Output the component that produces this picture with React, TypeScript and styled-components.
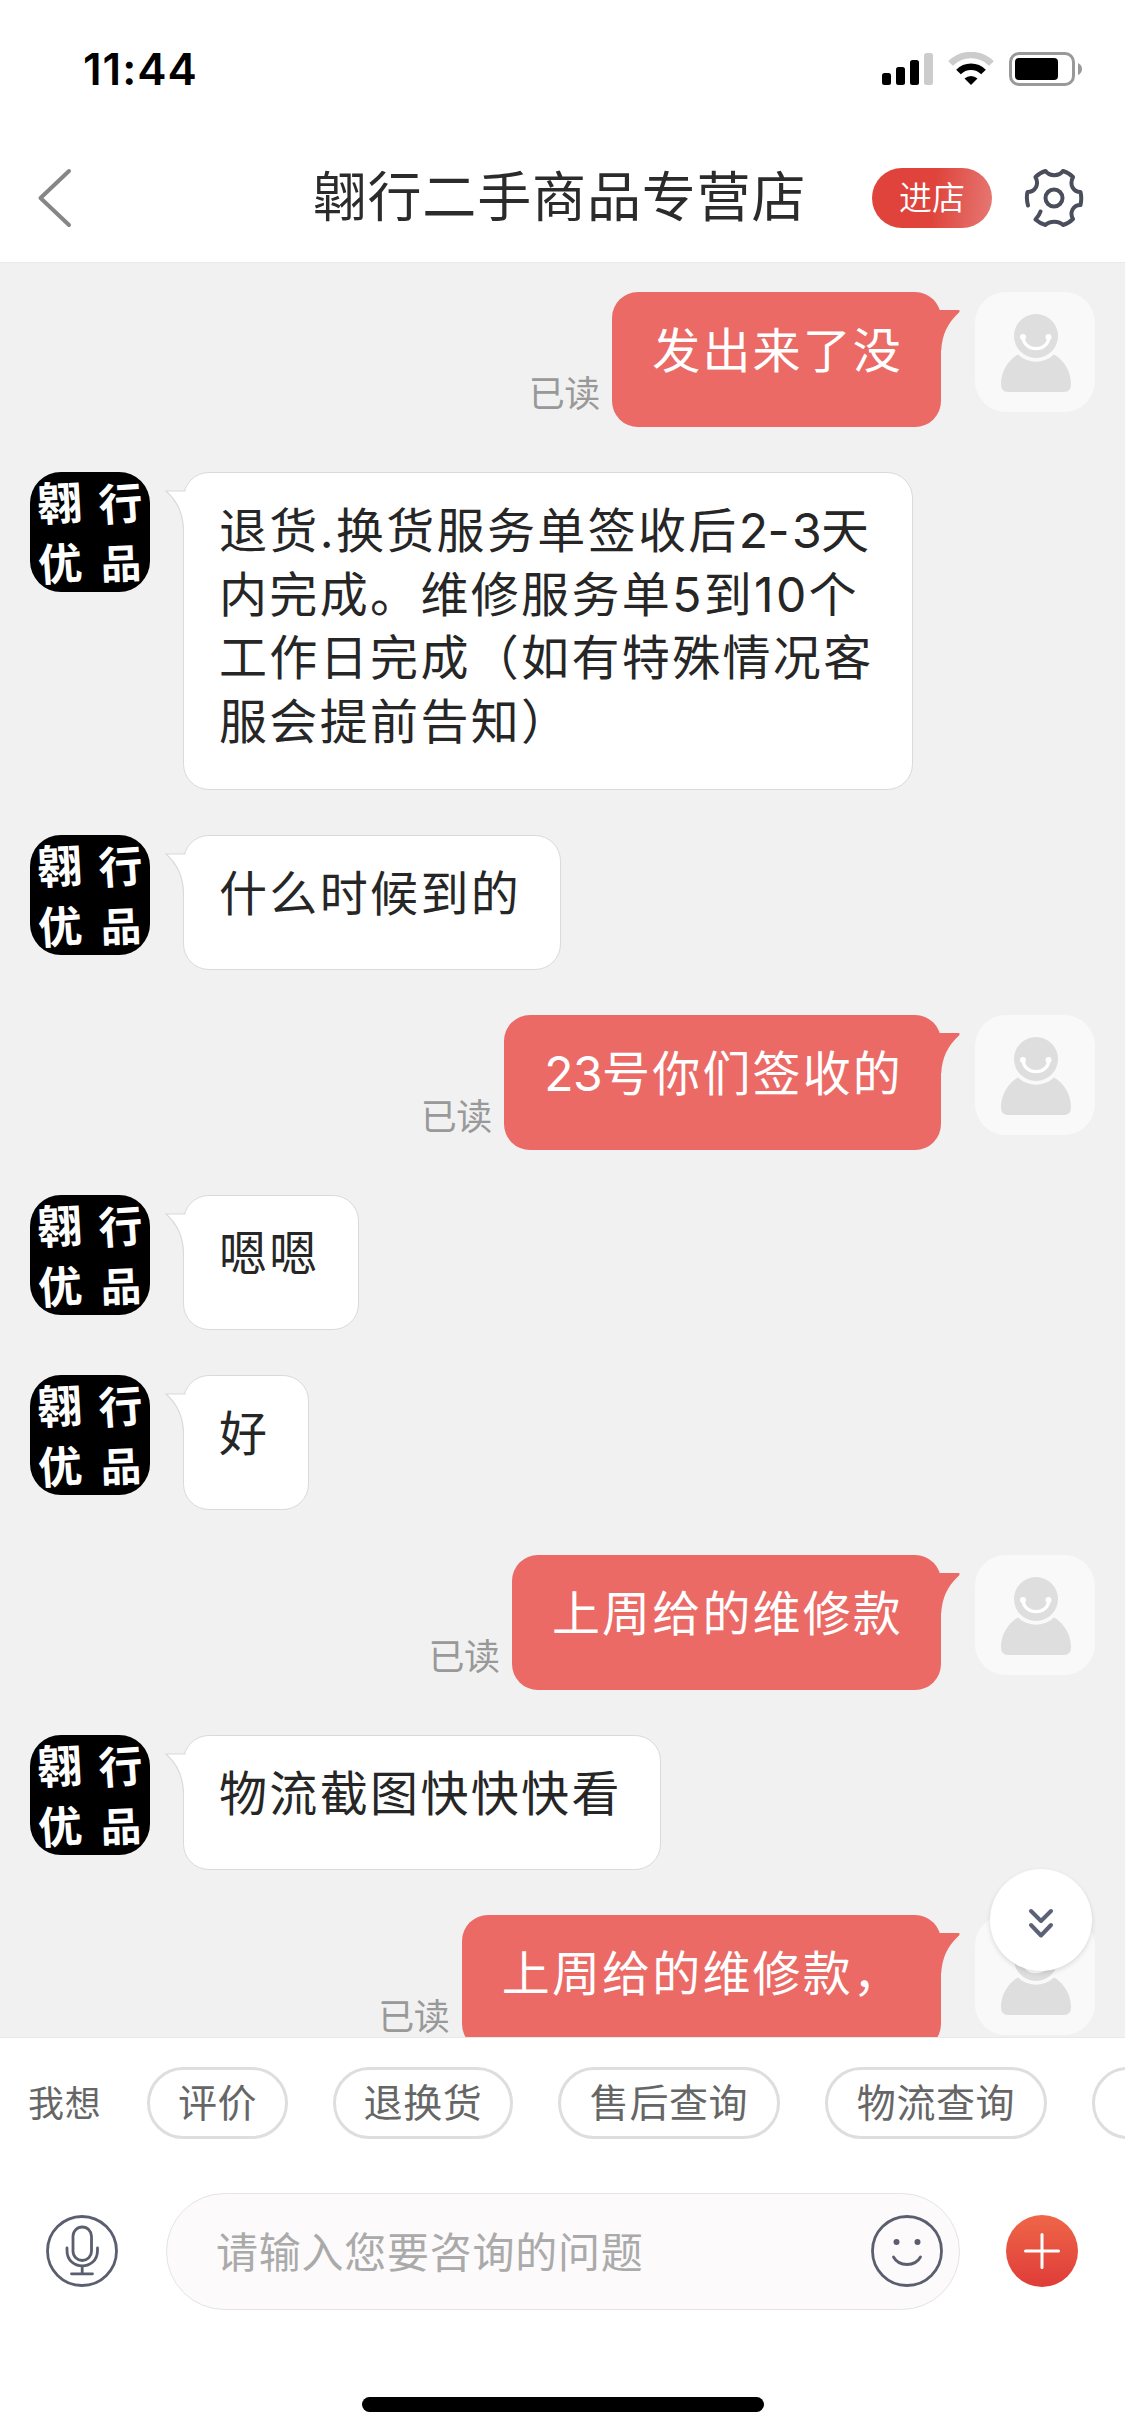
import React from "react";
import styled, { createGlobalStyle, css } from "styled-components";

const Global = createGlobalStyle`
  * { box-sizing: border-box; }
  body { margin: 0; background: #fff; }
`;

const Screen = styled.div`
  width: 1125px;
  height: 2436px;
  display: flex;
  flex-direction: column;
  overflow: hidden;
  background: #fff;
  font-family: Inter, "Noto Sans CJK SC", sans-serif;
  color: #262626;
`;

const StatusBar = styled.div`
  height: 132px;
  flex: none;
  display: flex;
  justify-content: space-between;
  padding: 52px 43px 0 83px;
`;

const Clock = styled.div`
  font-size: 44px;
  line-height: 34px;
  font-weight: 600;
  letter-spacing: 1px;
  color: #000;
`;

const StatusIcons = styled.svg`
  display: block;
  width: 200px;
  height: 34px;
`;

const NavBar = styled.div`
  height: 131px;
  flex: none;
  display: flex;
  align-items: center;
  padding: 2px 41px 0 36px;
  border-bottom: 1px solid #e9e9e9;
`;

const BackIcon = styled.svg`
  width: 38px;
  height: 62px;
  flex: none;
`;

const Title = styled.h1`
  margin: 0;
  flex: 1;
  padding-left: 173px;
  text-align: center;
  font-size: 54px;
  line-height: 80px;
  font-weight: 400;
  letter-spacing: 0.85px;
  color: #2b2b2b;
  white-space: nowrap;
`;

const ShopButton = styled.button`
  width: 120px;
  height: 60px;
  margin: 0 32px 0 0;
  padding: 0;
  border: 0;
  border-radius: 30px;
  background: linear-gradient(97deg, #df433b 50%, #e67874 100%);
  color: #fff;
  font: 350 33px/60px Inter, "Noto Sans CJK SC", sans-serif;
`;

const GearIcon = styled.svg`
  width: 60px;
  height: 60px;
  flex: none;
`;

const Chat = styled.div`
  position: relative;
  height: 1775px;
  flex: none;
  overflow: hidden;
  display: flex;
  flex-direction: column;
  gap: 45px;
  padding: 29px 30px 0;
  background: #f1f1f1;
  border-bottom: 1px solid #e8e8e8;
`;

const Row = styled.div<{ $mine?: boolean }>`
  display: flex;
  flex: none;
  align-items: flex-start;
  flex-direction: ${(p) => (p.$mine ? "row-reverse" : "row")};
  gap: ${(p) => (p.$mine ? 34 : 33)}px;
`;

const ShopAvatar = styled.div`
  width: 120px;
  height: 120px;
  flex: none;
  display: grid;
  grid-template-columns: 61px 46px;
  grid-template-rows: 60px 46px;
  padding: 8px 0 0 7px;
  border-radius: 31px;
  background: #000;
  color: #fff;
  font-size: 44px;
  line-height: 48px;
  font-weight: 700;
`;

const Brush = styled.span<{ $tilt: number; $scale?: number }>`
  width: 46px;
  text-align: center;
  transform: rotate(${(p) => p.$tilt}deg) scale(${(p) => p.$scale ?? 1});
`;

const UserAvatar = styled.svg`
  width: 120px;
  height: 120px;
  flex: none;
`;

const Bubble = styled.div<{ $mine?: boolean }>`
  position: relative;
  flex: none;
  min-height: 135px;
  font-size: 48px;
  line-height: 63.4px;
  white-space: nowrap;
  border-radius: 26px;
  ${(p) =>
    p.$mine
      ? css`
          padding: 27px 38px 36px 40px;
          letter-spacing: 2.15px;
          background: #eb6a66;
          color: #fff;
        `
      : css`
          padding: 26.4px 38.5px 35.6px 35px;
          letter-spacing: 2.35px;
          background: #fff;
          border: 1px solid #d9dade;
        `}
`;

const Digit = styled.span`
  letter-spacing: -0.5px;
`;

const Tail = styled.svg<{ $mine?: boolean }>`
  position: absolute;
  width: 24px;
  height: 44px;
  ${(p) => (p.$mine ? "right: -19.5px; top: 16px;" : "left: -20px; top: 15px;")}
`;

const ReadMark = styled.span`
  align-self: flex-end;
  margin: 0 -21.5px 10px 0;
  font-size: 36px;
  line-height: 46px;
  letter-spacing: -0.5px;
  color: #999;
`;

const JumpButton = styled.button`
  position: absolute;
  right: 33px;
  top: 1606px;
  width: 102px;
  height: 102px;
  padding: 5px 0 0;
  border: 0;
  border-radius: 50%;
  background: #fff;
  box-shadow: 0 2px 5px rgba(0, 0, 0, 0.13);
  display: grid;
  place-items: center;
`;

const QuickBar = styled.div`
  height: 131px;
  flex: none;
  display: flex;
  align-items: center;
  overflow: hidden;
  padding: 0 0 2px 28px;
  color: #666;
`;

const QuickLabel = styled.span`
  width: 119px;
  flex: none;
  padding-bottom: 3px;
  font-size: 36px;
  letter-spacing: 0.8px;
`;

const Chip = styled.button<{ $width: number }>`
  width: ${(p) => p.$width}px;
  height: 72px;
  flex: none;
  margin: 0 45px 0 0;
  padding: 0;
  border: 3px solid #dedede;
  border-radius: 36px;
  background: #fff;
  color: #666;
  font: 400 39px/64px Inter, "Noto Sans CJK SC", sans-serif;
  letter-spacing: 0.6px;
  white-space: nowrap;
`;

const Composer = styled.div`
  height: 167px;
  flex: none;
  display: flex;
  align-items: center;
  padding: 0 47px 3px 46px;
`;

const RoundIcon = styled.svg`
  display: block;
  width: 72px;
  height: 72px;
  flex: none;
`;

const Field = styled.div`
  width: 794px;
  height: 117px;
  margin: 0 46px 0 48px;
  padding: 0 16px 0 49px;
  display: flex;
  align-items: center;
  justify-content: space-between;
  border: 1px solid #e4e4e6;
  border-radius: 59px;
  background: #fcfafb;
  color: #aaa;
  font-size: 42px;
  letter-spacing: 0.75px;
`;

const Placeholder = styled.span`
  padding-bottom: 4px;
`;

const HomeArea = styled.div`
  flex: 1;
  display: flex;
  justify-content: center;
  align-items: flex-end;
  padding-bottom: 24px;
`;

const HomeIndicator = styled.div`
  width: 402px;
  height: 15px;
  border-radius: 8px;
  background: #000;
`;

type Message = { mine?: boolean; lines: string[] };

const messages: Message[] = [
  { mine: true, lines: ["发出来了没"] },
  {
    lines: [
      "退货.换货服务单签收后2-3天",
      "内完成。维修服务单5到10个",
      "工作日完成（如有特殊情况客",
      "服会提前告知）",
    ],
  },
  { lines: ["什么时候到的"] },
  { mine: true, lines: ["23号你们签收的"] },
  { lines: ["嗯嗯"] },
  { lines: ["好"] },
  { mine: true, lines: ["上周给的维修款"] },
  { lines: ["物流截图快快快看"] },
  { mine: true, lines: ["上周给的维修款，"] },
];

const chips = [
  { text: "评价", width: 141 },
  { text: "退换货", width: 180 },
  { text: "售后查询", width: 222 },
  { text: "物流查询", width: 222 },
  { text: "", width: 180 },
];

function Person() {
  return (
    <UserAvatar viewBox="0 0 120 120">
      <rect width="120" height="120" rx="31" fill="#f9f9f9" />
      <circle cx="61" cy="44" r="22" fill="#dedede" />
      <path
        d="M43 62.5A26 26 0 0 0 79 62.5C89 68 96 80 96 92Q96 100 89 100H33Q26 100 26 92C26 80 33 68 43 62.5Z"
        fill="#dedede"
      />
      <path d="M48 45C49 60.500 73 60.500 74 45" fill="none" stroke="#fff" strokeWidth="3.4" />
      <circle cx="48" cy="45" r="3" fill="#fff" />
      <circle cx="73.500" cy="45" r="3" fill="#fff" />
    </UserAvatar>
  );
}

function ShopMark() {
  return (
    <ShopAvatar>
      <Brush $tilt={-3} $scale={1.04}>翱</Brush>
      <Brush $tilt={-4}>行</Brush>
      <Brush $tilt={-4}>优</Brush>
      <Brush $tilt={-2} $scale={0.92}>品</Brush>
    </ShopAvatar>
  );
}

function Line({ text }: { text: string }) {
  return (
    <div>
      {text.split(/([23])/).map((part, i) => (i % 2 ? <Digit key={i}>{part}</Digit> : part))}
    </div>
  );
}

function MessageRow({ mine, lines }: Message) {
  return (
    <Row $mine={mine}>
      {mine ? <Person /> : <ShopMark />}
      <Bubble $mine={mine}>
        {lines.map((line) => (
          <Line key={line} text={line} />
        ))}
        <Tail $mine={mine} viewBox="0 0 24 44">
          {mine ? (
            <path d="M0 2H21.500Q23.500 2.500 22 4.500Q5 20 4.300 42H0Z" fill="#eb6a66" />
          ) : (
            <>
              <path d="M24 3H2Q19 18 19.500 42H24Z" fill="#fff" />
              <path d="M21.500 3H2Q19 18 19.500 42" fill="none" stroke="#d9dade" strokeWidth="1.200" />
            </>
          )}
        </Tail>
      </Bubble>
      {mine && <ReadMark>已读</ReadMark>}
    </Row>
  );
}

export default function App() {
  return (
    <Screen>
      <Global />
      <StatusBar>
        <Clock>11:44</Clock>
        <StatusIcons viewBox="0 0 200 34">
          <rect x="0" y="21" width="9" height="12" rx="2.500" />
          <rect x="14" y="15" width="9" height="18" rx="2.500" />
          <rect x="28" y="8" width="9" height="25" rx="2.500" />
          <rect x="42" y="1" width="9" height="32" rx="2.500" fill="#ccc" />
          <g fill="none" strokeWidth="6.500">
            <path d="M68.500 11.500A29 29 0 0 1 109.500 11.500" stroke="#ccc" />
            <path d="M76.500 20A17.500 17.500 0 0 1 101.500 20" stroke="#000" />
          </g>
          <path d="M82.500 26.500A9.500 9.500 0 0 1 95.500 26.500L89 33Z" />
          <rect x="128.500" y="1.500" width="63" height="31" rx="8.500" fill="none" stroke="#999" strokeWidth="3" />
          <rect x="133" y="6" width="43" height="22" rx="4" />
          <path d="M196 11Q200 13 200 17Q200 21 196 23Z" fill="#999" />
        </StatusIcons>
      </StatusBar>
      <NavBar>
        <BackIcon viewBox="0 0 38 62" fill="none" stroke="#868686" strokeWidth="4" strokeLinecap="round" strokeLinejoin="round">
          <path d="M33 4L4.500 31L33 58" />
        </BackIcon>
        <Title>翶行二手商品专营店</Title>
        <ShopButton>进店</ShopButton>
        <GearIcon viewBox="-30 -30 60 60" fill="none" stroke="#4a4d5b" strokeWidth="4" strokeLinecap="round" strokeLinejoin="round">
          <path d="M-26 7.500Q-28 0 -26.500 -6C-19 -6 -14.500 -13 -18.500 -21Q-14 -25.500 -8.500 -27C-4.500 -21.500 5 -21.500 9 -27Q14.500 -25.500 19 -21C15 -13 19.500 -6 26.500 -6Q28 0 26.500 7C19.500 7 15 14 19 21Q14.500 25.500 9 27C5 22.500 -4.500 22.500 -8.500 27Q-14 25.500 -18.500 21.500Q-14.500 17 -13.500 13.500" />
          <circle r="8.500" />
        </GearIcon>
      </NavBar>
      <Chat>
        {messages.map((m) => (
          <MessageRow key={m.lines[0]} {...m} />
        ))}
        <JumpButton>
          <svg width="30" height="34" viewBox="0 0 30 34" fill="none" stroke="#5c6178" strokeWidth="4" strokeLinecap="round" strokeLinejoin="round">
            <path d="M5 5L15 15L25 5M5 19L15 29.500L25 19" />
          </svg>
        </JumpButton>
      </Chat>
      <QuickBar>
        <QuickLabel>我想</QuickLabel>
        {chips.map((c) => (
          <Chip key={c.text} $width={c.width}>
            {c.text}
          </Chip>
        ))}
      </QuickBar>
      <Composer>
        <RoundIcon viewBox="0 0 72 72" fill="none" stroke="#5a5e6e" strokeWidth="2.800" strokeLinecap="round">
          <circle cx="36" cy="36" r="34.500" />
          <rect x="27" y="12" width="18.500" height="33.500" rx="9.200" />
          <path d="M21 33V35.500C21 56 51.500 56 51.500 35.500V33M36.200 52V58.500M25.500 58.800H46.500" />
        </RoundIcon>
        <Field>
          <Placeholder>请输入您要咨询的问题</Placeholder>
          <RoundIcon viewBox="0 0 72 72" fill="none" stroke="#5a5e6e" strokeWidth="2.800" strokeLinecap="round">
            <circle cx="36" cy="36" r="34.500" />
            <circle cx="25.500" cy="27" r="3" fill="#5a5e6e" stroke="none" />
            <circle cx="46.500" cy="27" r="3" fill="#5a5e6e" stroke="none" />
            <path d="M22.500 42C28 52 44 52 49.500 42" />
          </RoundIcon>
        </Field>
        <RoundIcon viewBox="0 0 72 72">
          <defs>
            <linearGradient id="plus" x1="0" y1="0" x2="0" y2="1">
              <stop offset="0" stopColor="#ef6648" />
              <stop offset="1" stopColor="#df3c38" />
            </linearGradient>
          </defs>
          <circle cx="36" cy="36" r="36" fill="url(#plus)" />
          <path d="M36 19.500V52.500M19.500 36H52.500" stroke="#fff" strokeWidth="3" strokeLinecap="round" />
        </RoundIcon>
      </Composer>
      <HomeArea>
        <HomeIndicator />
      </HomeArea>
    </Screen>
  );
}
